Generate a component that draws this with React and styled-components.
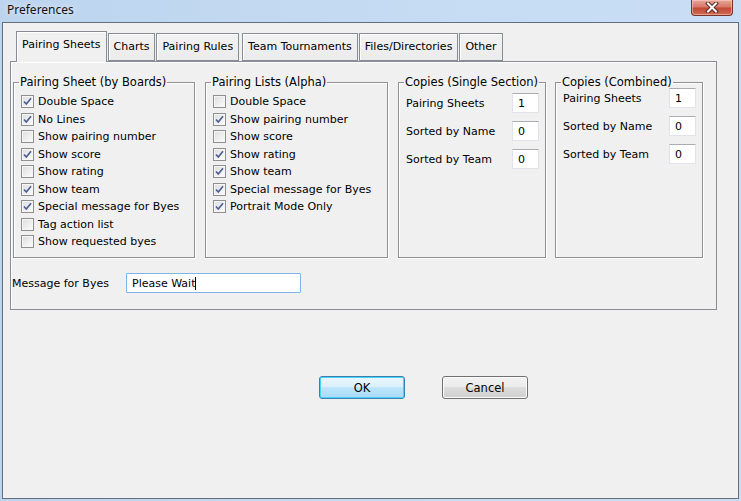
import React from 'react';
import styled, { createGlobalStyle } from 'styled-components';

const GlobalStyle = createGlobalStyle`
  html, body {
    margin: 0;
    padding: 0;
    background: #c4daf2;
  }
  * {
    box-sizing: border-box;
  }
`;

const Frame = styled.div`
  width: 741px;
  height: 501px;
  display: flex;
  flex-direction: column;
  padding: 0 2px 2px 2px;
  background: linear-gradient(90deg, #bcd4ee 0%, #c6dcf3 60%, #c9def4 100%);
  font-family: 'DejaVu Sans', sans-serif;
  font-size: 11px;
  color: #000;
`;

const TitleBar = styled.div`
  height: 22px;
  display: flex;
  align-items: flex-start;
  justify-content: space-between;
  padding-left: 5px;
  padding-right: 6px;
`;

const Title = styled.div`
  font-family: 'Noto Sans', sans-serif;
  font-size: 12px;
  line-height: 20px;
  color: #111;
  text-shadow: 0 0 6px rgba(255, 255, 255, 0.9);
`;

const CloseButton = styled.div`
  width: 42px;
  height: 16px;
  display: flex;
  align-items: center;
  justify-content: center;
  border: 1px solid #7a3328;
  border-top: none;
  border-radius: 0 0 4px 4px;
  background: linear-gradient(180deg, #e7a797 0%, #d7796a 45%, #c44a38 55%, #cf6a52 100%);
  box-shadow: inset 0 0 0 1px rgba(255, 220, 210, 0.5);
`;

const Client = styled.div`
  flex: 1;
  display: flex;
  flex-direction: column;
  border: 1px solid #646e7c;
  background: #f0f0f0;
  padding-top: 8px;
`;

const TabStrip = styled.div`
  display: flex;
  align-items: flex-end;
  height: 30px;
  margin-left: 13px;
  position: relative;
  z-index: 1;
`;

const Tab = styled.div`
  height: ${(p) => (p.$active ? '31px' : '28px')};
  margin-bottom: ${(p) => (p.$active ? '-1px' : '0')};
  margin-left: ${(p) => p.$gap}px;
  padding: 5px 5px 0;
  border: 1px solid #898c95;
  border-bottom: ${(p) => (p.$active ? 'none' : '1px solid #898c95')};
  background: ${(p) => (p.$active ? '#f0f0f0' : 'linear-gradient(180deg, #f2f2f2, #ebebeb)')};
  box-shadow: inset 1px 1px 0 #fff;
  font-size: 11px;
  line-height: 15px;
  white-space: nowrap;
`;

const Panel = styled.div`
  margin-left: 7px;
  width: 707px;
  height: 249px;
  border: 1px solid #898c95;
  box-shadow: inset 1px 1px 0 #fff;
  padding: 13px 0 0 2px;
`;

const GroupRow = styled.div`
  display: flex;
  gap: 10px;
`;

const Group = styled.fieldset`
  margin: 0;
  margin-left: ${(p) => p.$shift || 0}px;
  padding: 0;
  min-width: 0;
  width: ${(p) => p.$width}px;
  height: 183px;
  border: 1px solid #8f9090;
  box-shadow: 1px 1px 0 #fff, inset 1px 1px 0 #fff;
`;

const Legend = styled.legend`
  margin-left: 5px;
  padding: 0 1px;
  line-height: 14px;
  font-size: 11.5px;
  white-space: nowrap;
`;

const CheckList = styled.div`
  display: flex;
  flex-direction: column;
  padding: 4px 0 0 7px;
`;

const CheckRow = styled.label`
  height: 17.5px;
  display: flex;
  align-items: center;
  gap: 4px;
  white-space: nowrap;
`;

const Box = styled.span`
  width: 13px;
  height: 13px;
  display: flex;
  align-items: center;
  justify-content: center;
  border: 1px solid #8e8f8f;
  background: linear-gradient(135deg, #dcdcdc 0%, #f0f0f0 60%, #fbfbfb 100%);
  box-shadow: inset 0 0 0 1px #f6f6f6;
`;

const FieldList = styled.div`
  display: flex;
  flex-direction: column;
  gap: 8px;
  padding: 0 6px 0 7px;
  margin-top: ${(p) => p.$top}px;
`;

const FieldRow = styled.div`
  height: 20px;
  display: flex;
  align-items: center;
  justify-content: space-between;
`;

const NumberBox = styled.div`
  width: 27px;
  height: 20px;
  padding-left: 5px;
  display: flex;
  align-items: center;
  background: #fff;
  border: 1px solid #e2e3ea;
  border-top-color: #abadb3;
`;

const MessageRow = styled.div`
  display: flex;
  align-items: center;
  margin-top: 15px;
  margin-left: -1px;
`;

const MessageLabel = styled.span`
  width: 114px;
`;

const TextField = styled.div`
  width: 175px;
  height: 20px;
  padding-left: 5px;
  display: flex;
  align-items: center;
  background: #fff;
  border: 1px solid #7eb4ea;
  border-radius: 1px;
`;

const Caret = styled.span`
  width: 1px;
  height: 13px;
  background: #000;
`;

const ButtonRow = styled.div`
  display: flex;
  gap: 37px;
  margin-top: 66px;
  margin-left: 316px;
`;

const Button = styled.div`
  width: 86px;
  height: 23px;
  display: flex;
  align-items: center;
  justify-content: center;
  border-radius: 3px;
  border: 1px solid ${(p) => (p.$primary ? '#3c7fb1' : '#707070')};
  background: ${(p) =>
    p.$primary
      ? 'linear-gradient(180deg, #eaf6fd 0%, #d9f0fc 50%, #bee6fd 50%, #a7d9f5 100%)'
      : 'linear-gradient(180deg, #f2f2f2 0%, #ebebeb 50%, #dddddd 50%, #cfcfcf 100%)'};
  box-shadow: inset 0 0 0 1px ${(p) => (p.$primary ? '#48d3fb' : '#fcfcfc')};
  font-size: 11.5px;
`;

function CheckBox({ checked, children }) {
  return (
    <CheckRow>
      <Box>
        {checked && (
          <svg width="9" height="9" viewBox="0 0 9 9">
            <path d="M1 4.5 L3.3 7 L8 1.2" fill="none" stroke="#4b5e91" strokeWidth="1.6" />
          </svg>
        )}
      </Box>
      {children}
    </CheckRow>
  );
}

const boardOptions = [
  ['Double Space', true],
  ['No Lines', true],
  ['Show pairing number', false],
  ['Show score', true],
  ['Show rating', false],
  ['Show team', true],
  ['Special message for Byes', true],
  ['Tag action list', false],
  ['Show requested byes', false],
];

const alphaOptions = [
  ['Double Space', false],
  ['Show pairing number', true],
  ['Show score', false],
  ['Show rating', true],
  ['Show team', true],
  ['Special message for Byes', true],
  ['Portrait Mode Only', true],
];

const tabs = [
  ['Pairing Sheets', 0],
  ['Charts', 1],
  ['Pairing Rules', 1],
  ['Team Tournaments', 3],
  ['Files/Directories', 1],
  ['Other', 1],
];

function Copies({ title, width, top, shift, values }) {
  const labels = ['Pairing Sheets', 'Sorted by Name', 'Sorted by Team'];
  return (
    <Group $width={width} $shift={shift}>
      <Legend>{title}</Legend>
      <FieldList $top={top}>
        {labels.map((l, i) => (
          <FieldRow key={l}>
            <span>{l}</span>
            <NumberBox>{values[i]}</NumberBox>
          </FieldRow>
        ))}
      </FieldList>
    </Group>
  );
}

export default function App() {
  return (
    <>
      <GlobalStyle />
      <Frame>
        <TitleBar>
          <Title>Preferences</Title>
          <CloseButton>
            <svg width="14" height="11" viewBox="0 0 14 11">
              <path d="M3 1.5 L11 9.5 M11 1.5 L3 9.5" stroke="#5a2a24" strokeWidth="4" strokeLinecap="square" />
              <path d="M3 1.5 L11 9.5 M11 1.5 L3 9.5" stroke="#fff" strokeWidth="2" strokeLinecap="square" />
            </svg>
          </CloseButton>
        </TitleBar>
        <Client>
          <TabStrip>
            {tabs.map(([t, gap], i) => (
              <Tab key={t} $active={i === 0} $gap={gap}>
                {t}
              </Tab>
            ))}
          </TabStrip>
          <Panel>
            <GroupRow>
              <Group $width={182}>
                <Legend>Pairing Sheet (by Boards)</Legend>
                <CheckList>
                  {boardOptions.map(([l, c]) => (
                    <CheckBox key={l} checked={c}>{l}</CheckBox>
                  ))}
                </CheckList>
              </Group>
              <Group $width={183}>
                <Legend>Pairing Lists (Alpha)</Legend>
                <CheckList>
                  {alphaOptions.map(([l, c]) => (
                    <CheckBox key={l} checked={c}>{l}</CheckBox>
                  ))}
                </CheckList>
              </Group>
              <Copies title="Copies (Single Section)" width={148} top={4} values={['1', '0', '0']} />
              <Copies title="Copies (Combined)" width={148} top={-1} shift={-1} values={['1', '0', '0']} />
            </GroupRow>
            <MessageRow>
              <MessageLabel>Message for Byes</MessageLabel>
              <TextField>
                Please Wait
                <Caret />
              </TextField>
            </MessageRow>
          </Panel>
          <ButtonRow>
            <Button $primary>OK</Button>
            <Button>Cancel</Button>
          </ButtonRow>
        </Client>
      </Frame>
    </>
  );
}
